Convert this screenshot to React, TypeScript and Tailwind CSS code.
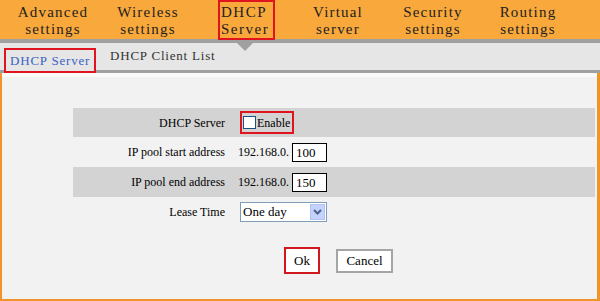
import React from "react";

export default function App() {
  return (
    <div className="w-[600px] h-[301px] overflow-hidden bg-[#f2f2f2] font-['Liberation_Serif','Times_New_Roman',serif]">
      {/* top nav */}
      <div className="h-[39px] bg-[#f9a83b] flex pl-[13px] text-[15px] leading-[17px] tracking-[1.2px] text-[#222]">
        <div className="w-[80px] text-center pt-[4px]">Advanced<br />settings</div>
        <div className="ml-[15px] w-[80px] text-center pt-[4px]">Wireless<br />settings</div>
        <div className="ml-[30px] w-[57px] h-[40px] border-2 border-[#e0141e] pl-[1px] pt-[2px] tracking-[1.5px] relative z-10">DHCP<br />Server</div>
        <div className="ml-[23px] w-[80px] text-center pt-[4px]">Virtual<br />server</div>
        <div className="ml-[15px] w-[80px] text-center pt-[4px]">Security<br />settings</div>
        <div className="ml-[15px] w-[80px] text-center pt-[4px]">Routing<br />settings</div>
      </div>
      {/* sub tabs */}
      <div className="relative h-[34px] bg-[#e6e6e6] border-t-[4px] border-b-[3px] border-[#a0a0a0] flex items-end text-[13px] tracking-[0.8px]">
        <div className="absolute left-[237px] top-0 w-0 h-0 border-l-[8px] border-r-[8px] border-t-[8px] border-l-transparent border-r-transparent border-t-[#a0a0a0]" />
        <div className="relative top-[3px] ml-[4px] h-[25px] w-[92px] border-2 border-[#e0141e] bg-[#e6e6e6] flex items-center pl-[4px] text-[#3a62c4]">DHCP Server</div>
        <div className="ml-[14px] mb-[5px] text-[#333]">DHCP Client List</div>
      </div>
      {/* body */}
      <div className="h-[228px] border-l-2 border-r-[3px] border-b-2 border-[#f0932b] text-[12px] text-black">
        <div className="h-[4px] bg-[#fafafa]" />
        <div className="ml-[71px] mr-[2px] mt-[31px]">
          <div className="h-[29px] bg-[#d3d3d3] flex items-center">
            <div className="w-[152px] text-right">DHCP Server</div>
            <div className="ml-[15px] h-[23px] w-[54px] border-2 border-[#e0141e] flex items-center pl-[1px]">
              <span className="inline-block w-[13px] h-[13px] border border-[#1c5180] bg-white" />
              <span className="ml-[1px]">Enable</span>
            </div>
          </div>
          <div className="h-[30px] flex items-center">
            <div className="w-[152px] text-right">IP pool start address</div>
            <div className="ml-[13px]">192.168.0.</div>
            <div className="ml-[3px] w-[35px] h-[19px] border border-black bg-white text-[13px] leading-[17px] pl-[3px]">100</div>
          </div>
          <div className="h-[30px] bg-[#d3d3d3] flex items-center">
            <div className="w-[152px] text-right">IP pool end address</div>
            <div className="ml-[13px]">192.168.0.</div>
            <div className="ml-[3px] w-[35px] h-[19px] border border-black bg-white text-[13px] leading-[17px] pl-[3px]">150</div>
          </div>
          <div className="h-[30px] flex items-center">
            <div className="w-[152px] text-right">Lease Time</div>
            <div className="ml-[15px] w-[87px] h-[20px] border border-[#7f9db9] bg-white flex items-center justify-between text-[13px]">
              <span className="pl-[2px]">One day</span>
              <span className="w-[15px] h-[16px] mr-[1px] bg-[#c3d3fd] border border-[#b2c3f0] flex items-center justify-center">
                <svg width="9" height="6" viewBox="0 0 9 6"><path d="M1 1 L4.5 4.5 L8 1" fill="none" stroke="#4d6185" strokeWidth="2" /></svg>
              </span>
            </div>
          </div>
        </div>
        <div className="flex mt-[20px] ml-[282px] items-center">
          <div className="w-[36px] h-[27px] border-2 border-[#d11720] bg-white flex items-center justify-center text-[13px]">Ok</div>
          <div className="ml-[16px] w-[57px] h-[24px] border-2 border-[#a5a5a5] bg-white flex items-center justify-center text-[13px]">Cancel</div>
        </div>
      </div>
    </div>
  );
}
